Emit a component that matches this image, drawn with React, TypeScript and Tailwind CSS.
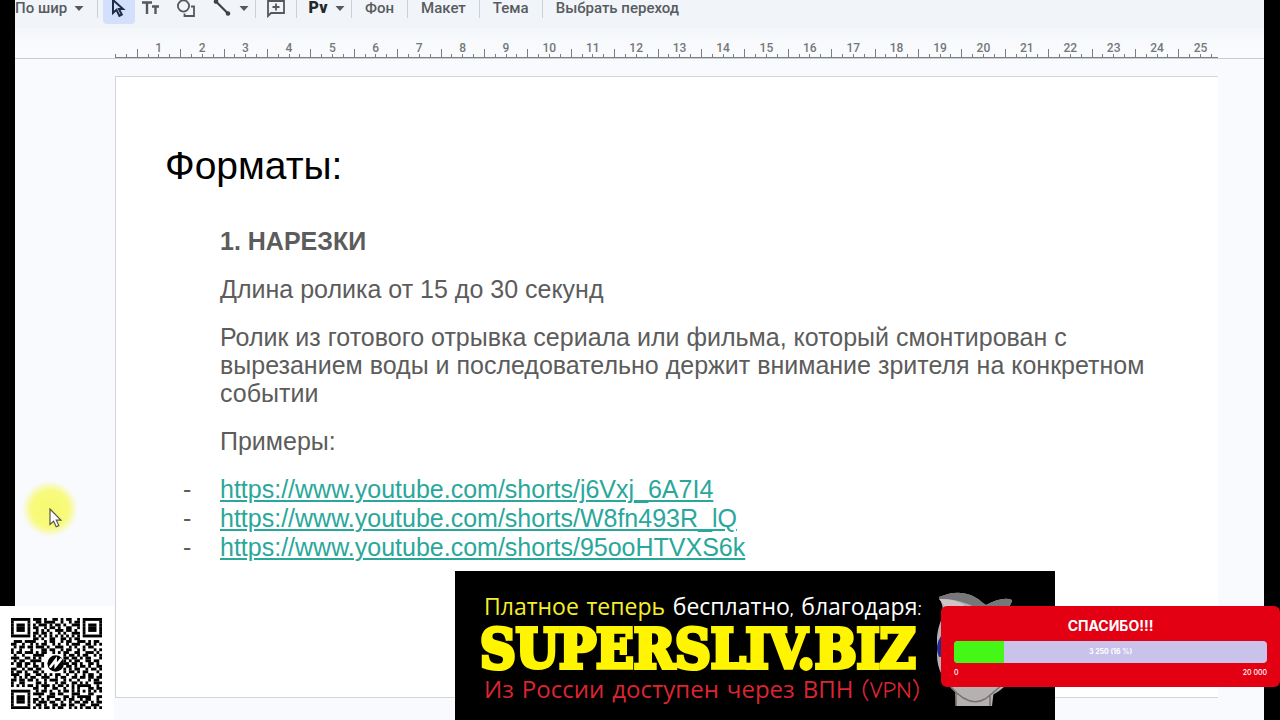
import React from 'react';

const LINKS = [
  'https://www.youtube.com/shorts/j6Vxj_6A7I4',
  'https://www.youtube.com/shorts/W8fn493R_lQ',
  'https://www.youtube.com/shorts/95ooHTVXS6k'
];

const QR_ROWS = [
  '#######.###.#..##.#.##..#.#######',
  '#.....#..##.####..#..#.##.#.....#',
  '#.###.#.#.###.#.##.#..###.#.###.#',
  '#.###.#.##..#.##.#..##..#.#.###.#',
  '#.###.#..#.#.#..###.##.#..#.###.#',
  '#.....#.##.##.#..#.#..###.#.....#',
  '#######.#.#.#.#.#.#.#.#.#.#######',
  '........##.#..##..##.#.##........',
  '.###.####...#.##..#.##..###.#.##.',
  '##..#..#.#.##..#.#..#.###..##.#.#',
  '.#.##.##.###.#..###..#.#..#.##...',
  '#..#...#...##.##..#.##..#.#...#.#',
  '#.##.###.#.##..#.#.##..##..###.#.',
  '.#..#...####.......#.##.#.##..#.#',
  '###..##.#.#........##.##.#.##...#',
  '.#.##..####........#.#.##..##.##.',
  '#.##.##.#..#.......##.##.#..##.#.',
  '..##.#..##.#........##.#.##.#..##',
  '##..#.##.##........#.#.##..#.##.#',
  '#.##.#..##.#.......#.##.#.##...#.',
  '###..##..##.#.#.##..#..#..#.##..#',
  '.#.#.#.##..###..#.##..##.##.##.##',
  '##.##.##.#..#.###..#.#..#...#.##.',
  '#..##....##.#...#.##..##.#.#..###',
  '#.#.#.##.#.###.#.##.#.#.#####..#.',
  '........##..#..##..#..#.#...##.##',
  '#######..#.##.#..#.##.#.#.#.#.#.#',
  '#.....#.####..##.##...###...##...',
  '#.###.#...#..###...##.#.#####..##',
  '#.###.#.##.#.#..##.#.##..#.##..#.',
  '#.###.#.#.###.##..#..#.##.##.#.##',
  '#.....#..##.#..##.##.##..##..###.',
  '#######.#.#.##.#.##..#.#.#.##.#.#'
];

const GOAL = { current: 3250, total: 20000 };

const Caret = () => (
  <svg viewBox="0 0 12 12" className="h-3 w-3 shrink-0" fill="#55595c">
    <path d="M1.5 4h9L6 9z" />
  </svg>
);

const Separator = () => <div className="h-5 w-px shrink-0 bg-[#cdd1d6]" />;

const ToolButton = ({
  label,
  active = false,
  children
}: {
  label: string;
  active?: boolean;
  children: React.ReactNode;
}) => (
  <button
    aria-label={label}
    className={`flex h-8 w-8 shrink-0 items-center justify-center rounded-sm ${active ? 'bg-[#d3e0fb]' : ''}`}
  >
    {children}
  </button>
);

const TextButton = ({ children }: { children: React.ReactNode }) => (
  <button className="h-8 shrink-0 px-[13px] whitespace-nowrap">{children}</button>
);

const Toolbar = () => (
  <div className="overflow-hidden bg-[#f1f5f9] pb-1">
    <div className="-mt-2 flex h-8 items-center text-[15px] leading-4 font-medium text-[#585c60]">
      <button className="flex h-8 w-[82px] shrink-0 items-center gap-1.5 whitespace-nowrap">
        По шир
        <Caret />
      </button>
      <Separator />
      <div className="flex items-center pr-[5px] pl-[5px]">
        <ToolButton label="Выбрать" active>
          <svg viewBox="0 0 20 24" className="h-6 w-5" fill="none" stroke="#1d2b45" strokeWidth="2">
            <path d="M4 4v13l3.400-3.200 3 6 2.400-1.200-2.900-5.700H14z" />
          </svg>
        </ToolButton>
        <ToolButton label="Текстовое поле">
          <svg viewBox="0 0 20 20" className="h-5 w-5" fill="none" stroke="#55595c" strokeWidth="2.4">
            <path d="M1 4.500h10M6 4.500V16M11 8.500h7M14.500 8.500V16" />
          </svg>
        </ToolButton>
        <div className="flex items-center gap-1 pl-[3px]">
          <ToolButton label="Фигура">
            <svg viewBox="0 0 20 20" className="h-5 w-5" fill="none" stroke="#55595c" strokeWidth="1.8">
              <circle cx="7.500" cy="8" r="5.600" />
              <path d="M15 8.500h3V18H8.500v-2.600" />
            </svg>
          </ToolButton>
          <div className="flex items-center">
            <ToolButton label="Линия">
              <svg viewBox="0 0 20 20" className="h-5 w-5" fill="#3f4347" stroke="#3f4347" strokeWidth="2.2">
                <path d="M4 3.500L16 15.500" />
                <circle cx="4" cy="3.500" r="1.200" />
                <circle cx="16" cy="15.500" r="1.200" />
              </svg>
            </ToolButton>
            <Caret />
          </div>
        </div>
      </div>
      <Separator />
      <div className="px-1">
        <ToolButton label="Комментарий">
          <svg viewBox="0 0 20 20" className="h-5 w-5" fill="none" stroke="#55595c" strokeWidth="1.8">
            <path d="M2 18V3h16v12H5z" />
            <path d="M10 5.500v7M6.500 9h7" />
          </svg>
        </ToolButton>
      </div>
      <Separator />
      <div className="flex items-center px-[5px]">
        <ToolButton label="Pv">
          <span className="text-base leading-4 font-black text-[#25282b]">Pv</span>
        </ToolButton>
        <Caret />
      </div>
      <Separator />
      <TextButton>Фон</TextButton>
      <Separator />
      <TextButton>Макет</TextButton>
      <Separator />
      <TextButton>Тема</TextButton>
      <Separator />
      <TextButton>Выбрать переход</TextButton>
    </div>
  </div>
);

// 25.4 cm wide, four ticks per centimetre
const Ruler = () => (
  <div className="border-b border-[#c9ccd0] bg-gradient-to-b from-[#f5f8fb] to-[#fafbfd] pt-3 pr-[46px] pl-[100px]">
    <div className="-mr-1 flex pl-[22px] text-xs leading-4 font-medium text-[#747779]">
      {Array.from({ length: 25 }, (_, i) => (
        <span key={i} className="-mb-2 flex-1 text-center">
          {i + 1}
        </span>
      ))}
    </div>
    <svg viewBox="0 0 1103 10" preserveAspectRatio="none" className="block h-2.5 w-full" stroke="#7c7f82">
      {Array.from({ length: 102 }, (_, i) => {
        const x = Math.round(i * 10.85) + 0.5;
        return <line key={i} x1={x} x2={x} y1={i % 4 === 2 ? 1 : 6} y2="10" />;
      })}
      <line x1="0" x2="1103" y1="9.5" y2="9.5" />
    </svg>
  </div>
);

const Slide = () => (
  <div className="flex-1 border-t border-b border-l border-[#d3d6d8] bg-white pr-[50px] pl-[49px]">
    <h1 className="pt-[66px] text-[39px] leading-[46px] text-black">Форматы:</h1>
    <div className="space-y-5 pt-[38px] pl-[55px] text-[25px] leading-7 text-[#5c5c5c]">
      <p className="font-bold">1. НАРЕЗКИ</p>
      <p>Длина ролика от 15 до 30 секунд</p>
      <p>
        Ролик из готового отрывка сериала или фильма, который смонтирован с вырезанием воды и
        последовательно держит внимание зрителя на конкретном событии
      </p>
      <p>Примеры:</p>
      <ul className="leading-[29px]">
        {LINKS.map((link) => (
          <li key={link} className="-ml-[37px] flex">
            <span className="w-[37px]">-</span>
            <a href={link} className="text-[#2aa79b] underline decoration-2 underline-offset-2">
              {link}
            </a>
          </li>
        ))}
      </ul>
    </div>
  </div>
);

const Pointer = () => (
  <div className="absolute top-[481px] left-[22px] h-14 w-14 rounded-full bg-[radial-gradient(circle_closest-side,#f6f971_0%,#f8fa7c_65%,transparent_100%)]">
    <svg viewBox="0 0 14 20" className="mt-[27px] ml-[27px] h-5 w-3.5" fill="#fff" stroke="#55554a" strokeWidth="1.2">
      <path d="M1 1v15.500l3.600-3.300 2.600 5.600 2.600-1.200-2.500-5.400h4.600z" />
    </svg>
  </div>
);

const QrCode = () => (
  <div className="absolute bottom-0 left-0 bg-white pt-3 pr-3 pb-[11px] pl-[11px]">
    <svg viewBox="0 0 33 33" className="h-[91px] w-[91px]">
      {QR_ROWS.map((row, y) =>
        Array.from(row.matchAll(/#+/g), (run) => (
          <rect key={`${run.index}-${y}`} x={run.index} y={y} width={run[0].length} height="1.04" />
        ))
      )}
      <circle cx="16.200" cy="16.500" r="3" />
      <path
        d="M14.300 17.700l1.900-2.500v2.100l1.900-2.300"
        fill="none"
        stroke="#fff"
        strokeWidth="0.9"
        strokeLinecap="round"
      />
    </svg>
  </div>
);

const Mascot = () => (
  <svg viewBox="0 0 80 118" className="h-[118px] w-20 shrink-0">
    <path d="M2 6Q28-5 46 12L49 14Q66 5 75 9Q74 18 60 21L58 90L55 115H19L18 101Q0 84 0 64Q-2 42 5 27Q8 18 2 6z" fill="#b5b1b0" />
    <path d="M2 6Q28-5 46 12L49 14Q66 5 75 9Q74 18 60 21L40 17Q20 7 2 8z" fill="#77777a" />
    <path d="M2 8Q15 7 28 14L12 20z" fill="#d0c5c4" />
    <path d="M4 45Q-3 55 2 66L12 65V40z" fill="#202e91" />
    <path d="M58 90L55 104Q64 100 73 90z" fill="#b5b1b0" />
    <path d="M14 96Q32 117 48 108Q55 103 68 91M19 101v14M53 104v11" fill="none" stroke="#77716f" strokeWidth="1.5" />
  </svg>
);

const Banner = () => (
  <div className="absolute bottom-0 left-[455px] flex h-[149px] w-[600px] bg-black pt-5 pl-[29px]">
    <div className="w-[453px] whitespace-nowrap font-['Comic_Sans_MS','Comic_Neue','Open_Sans',sans-serif]">
      <p className="pt-px text-[23px] leading-8 text-white">
        <span className="text-[#f7ef29]">Платное теперь</span> бесплатно, благодаря:
      </p>
      <p className="-ml-1 font-['DejaVu_Serif_Condensed','DejaVu_Serif',serif] text-[55px] leading-[50px] font-bold text-[#fff500] [-webkit-text-stroke:4px_#fff500]">
        SUPERSLIV.BIZ
      </p>
      <p className="text-[24px] leading-8 text-[#dc2531]">Из России доступен через ВПН (VPN)</p>
    </div>
    <Mascot />
  </div>
);

const DonationGoal = () => {
  const percent = Math.round((GOAL.current / GOAL.total) * 100);
  return (
    <section className="absolute right-0 bottom-[33px] w-[339px] rounded-md bg-[#e30013] px-[13px] pt-2.5 pb-2 font-[Inter,sans-serif] text-white">
      <h2 className="text-center text-[14px] leading-5 font-bold">СПАСИБО!!!</h2>
      <div className="relative mt-[5px] h-[22px] overflow-hidden rounded bg-[#c9c3eb]">
        <div className="h-full bg-[#45f716]" style={{ width: `${percent}%` }} />
        <span className="absolute inset-0 text-center text-[7px] leading-[22px] font-bold">
          3 250 ({percent} %)
        </span>
      </div>
      <div className="mt-1 flex justify-between text-[7px] leading-3 font-medium">
        <span>0</span>
        <span>20 000</span>
      </div>
    </section>
  );
};

export default function App() {
  return (
    <div className="relative flex min-h-screen overflow-hidden bg-black pr-4 pl-[15px] font-[Roboto,sans-serif]">
      <main className="flex min-w-0 flex-1 flex-col bg-[#f9fafd]">
        <Toolbar />
        <Ruler />
        <div className="flex flex-1 flex-col pt-[17px] pr-[46px] pb-[22px] pl-[100px] font-['Liberation_Sans',Arial,sans-serif]">
          <Slide />
        </div>
      </main>
      <Pointer />
      <QrCode />
      <Banner />
      <DonationGoal />
    </div>
  );
}
